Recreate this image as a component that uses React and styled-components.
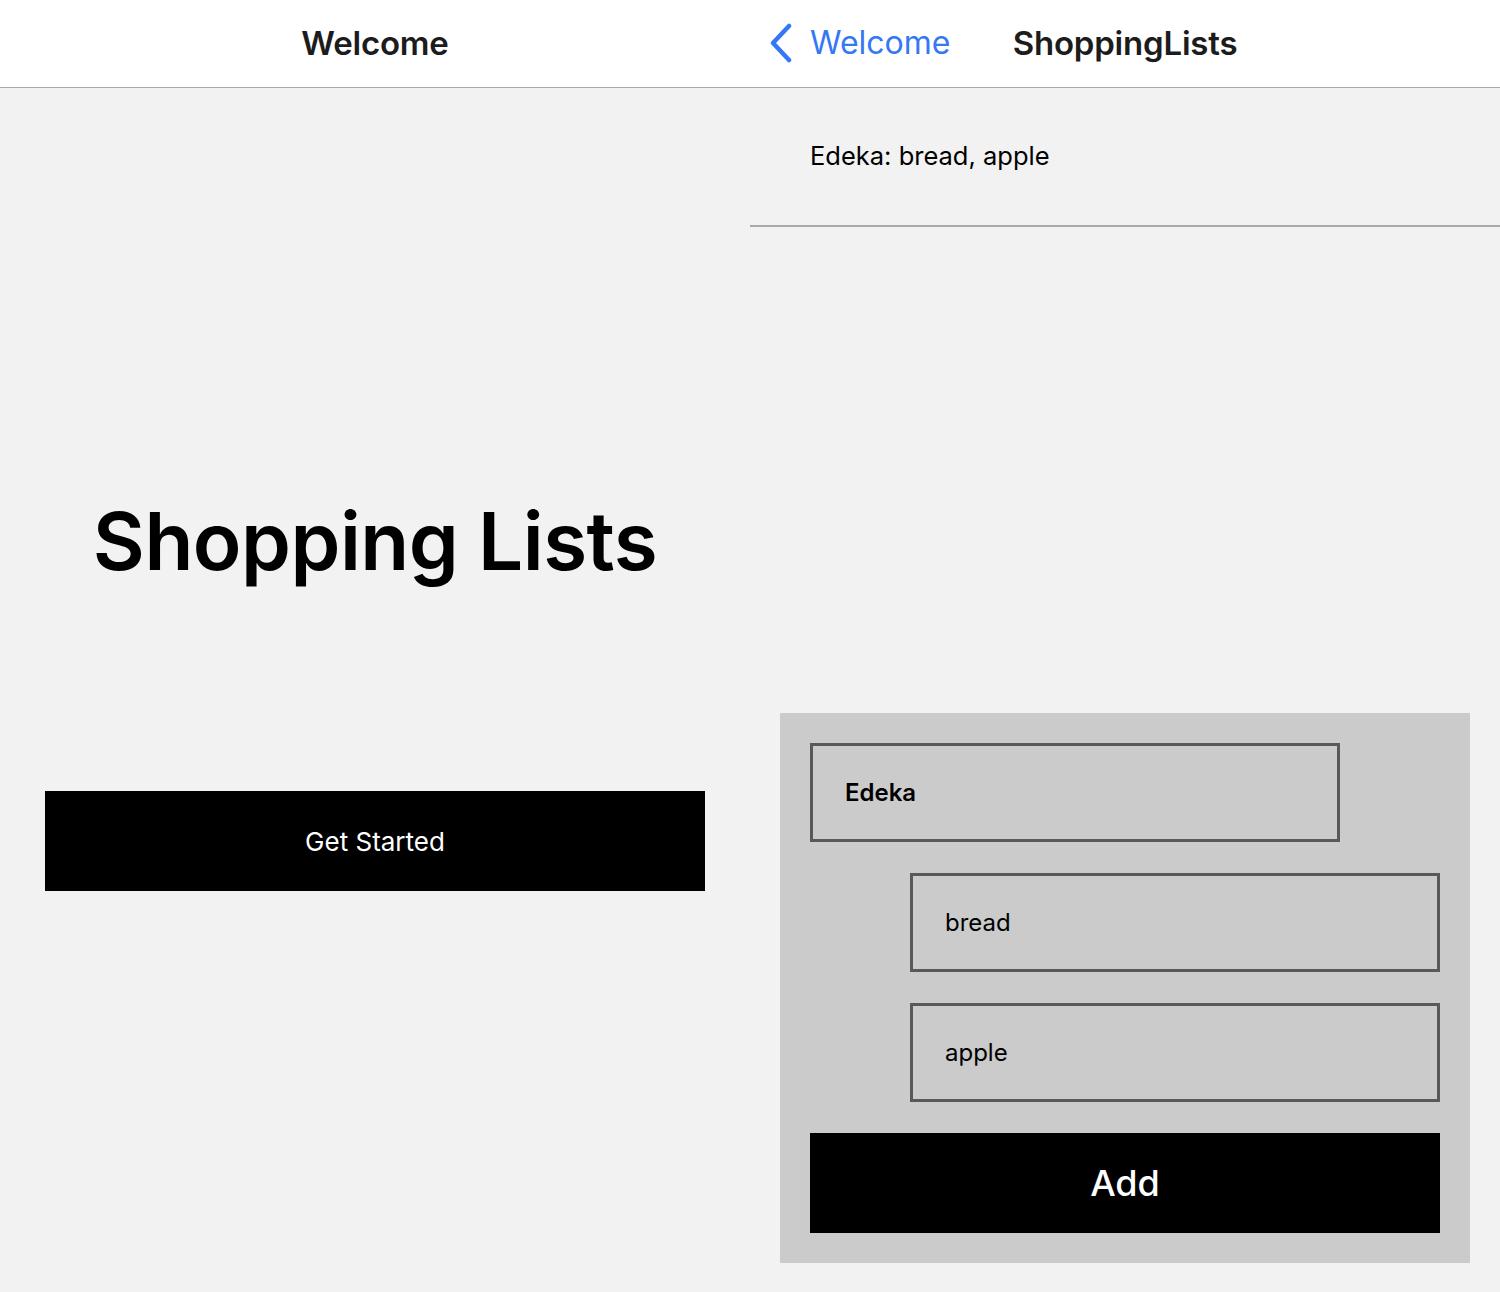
import React from "react";
import styled, { createGlobalStyle } from "styled-components";

const GlobalStyle = createGlobalStyle`
    html, body {
        margin: 0;
        padding: 0;
        background: #f2f2f2;
    }
    body {
        font-family: "Inter", "Liberation Sans", sans-serif;
    }
`;

const Screen = styled.div`
    width: 1500px;
    height: 1292px;
    display: grid;
    grid-template-columns: 750px 750px;
    overflow: hidden;
`;

const Pane = styled.div`
    display: flex;
    flex-direction: column;
    height: 1292px;
`;

const NavBar = styled.div`
    height: 88px;
    background: #fff;
    border-bottom: 1px solid #a9a9a9;
    display: flex;
    align-items: center;
    justify-content: center;
    padding-bottom: 2px;
    box-sizing: border-box;
    position: relative;
`;

const NavTitle = styled.div`
    font-size: 33px;
    font-weight: 600;
    color: #1c1c1c;
    letter-spacing: -0.2px;
`;

const BackButton = styled.div`
    position: absolute;
    left: 18px;
    top: 0;
    height: 85px;
    display: flex;
    align-items: center;
    gap: 16px;
    color: #3478f6;
    font-size: 32px;
`;

const WelcomeBody = styled.div`
    flex: 1;
    display: flex;
    flex-direction: column;
    align-items: center;
`;

const BigTitle = styled.h1`
    margin: 403px 0 0;
    font-size: 80px;
    font-weight: 600;
    letter-spacing: -0.5px;
    color: #000;
    line-height: 100px;
`;

const BlackButton = styled.button`
    border: none;
    background: #000;
    color: #fff;
    font-family: inherit;
    width: ${(p) => p.$width}px;
    height: 100px;
    font-size: ${(p) => p.$size}px;
    font-weight: ${(p) => p.$weight};
    margin-top: ${(p) => p.$top}px;
    cursor: pointer;
`;

const ListBody = styled.div`
    flex: 1;
    display: flex;
    flex-direction: column;
`;

const ListRow = styled.div`
    height: 139px;
    border-bottom: 2px solid #a9a9a9;
    display: flex;
    align-items: center;
    padding-left: 60px;
    padding-bottom: 3px;
    box-sizing: border-box;
    font-size: 25.5px;
    color: #000;
`;

const Spacer = styled.div`
    flex: 1;
`;

const FormBox = styled.div`
    margin: 0 30px 29px;
    background: #cbcbcb;
    padding: 30px;
    display: flex;
    flex-direction: column;
    gap: 31px;
`;

const Field = styled.div`
    box-sizing: border-box;
    width: 530px;
    height: 99px;
    margin-left: ${(p) => (p.$indent ? 100 : 0)}px;
    border: 3px solid #595959;
    display: flex;
    align-items: center;
    padding-left: 32px;
    font-size: 24px;
    font-weight: ${(p) => (p.$bold ? 600 : 400)};
    color: #000;
`;

function Chevron() {
    return (
        <svg width="26" height="40" viewBox="0 0 26 40" fill="none">
            <path d="M21 3 L5 20 L21 37" stroke="#3478f6" strokeWidth="4.5" strokeLinecap="round" strokeLinejoin="round" />
        </svg>
    );
}

export default function App() {
    return (
        <>
            <GlobalStyle />
            <Screen>
                <Pane>
                    <NavBar>
                        <NavTitle>Welcome</NavTitle>
                    </NavBar>
                    <WelcomeBody>
                        <BigTitle>Shopping Lists</BigTitle>
                        <BlackButton $width={660} $size={26} $weight={400} $top={200}>
                            Get Started
                        </BlackButton>
                    </WelcomeBody>
                </Pane>
                <Pane>
                    <NavBar>
                        <BackButton>
                            <Chevron />
                            <span>Welcome</span>
                        </BackButton>
                        <NavTitle>ShoppingLists</NavTitle>
                    </NavBar>
                    <ListBody>
                        <ListRow>Edeka: bread, apple</ListRow>
                        <Spacer />
                        <FormBox>
                            <Field $bold>Edeka</Field>
                            <Field $indent>bread</Field>
                            <Field $indent>apple</Field>
                            <BlackButton $width={630} $size={36} $weight={500} $top={0}>
                                Add
                            </BlackButton>
                        </FormBox>
                    </ListBody>
                </Pane>
            </Screen>
        </>
    );
}
